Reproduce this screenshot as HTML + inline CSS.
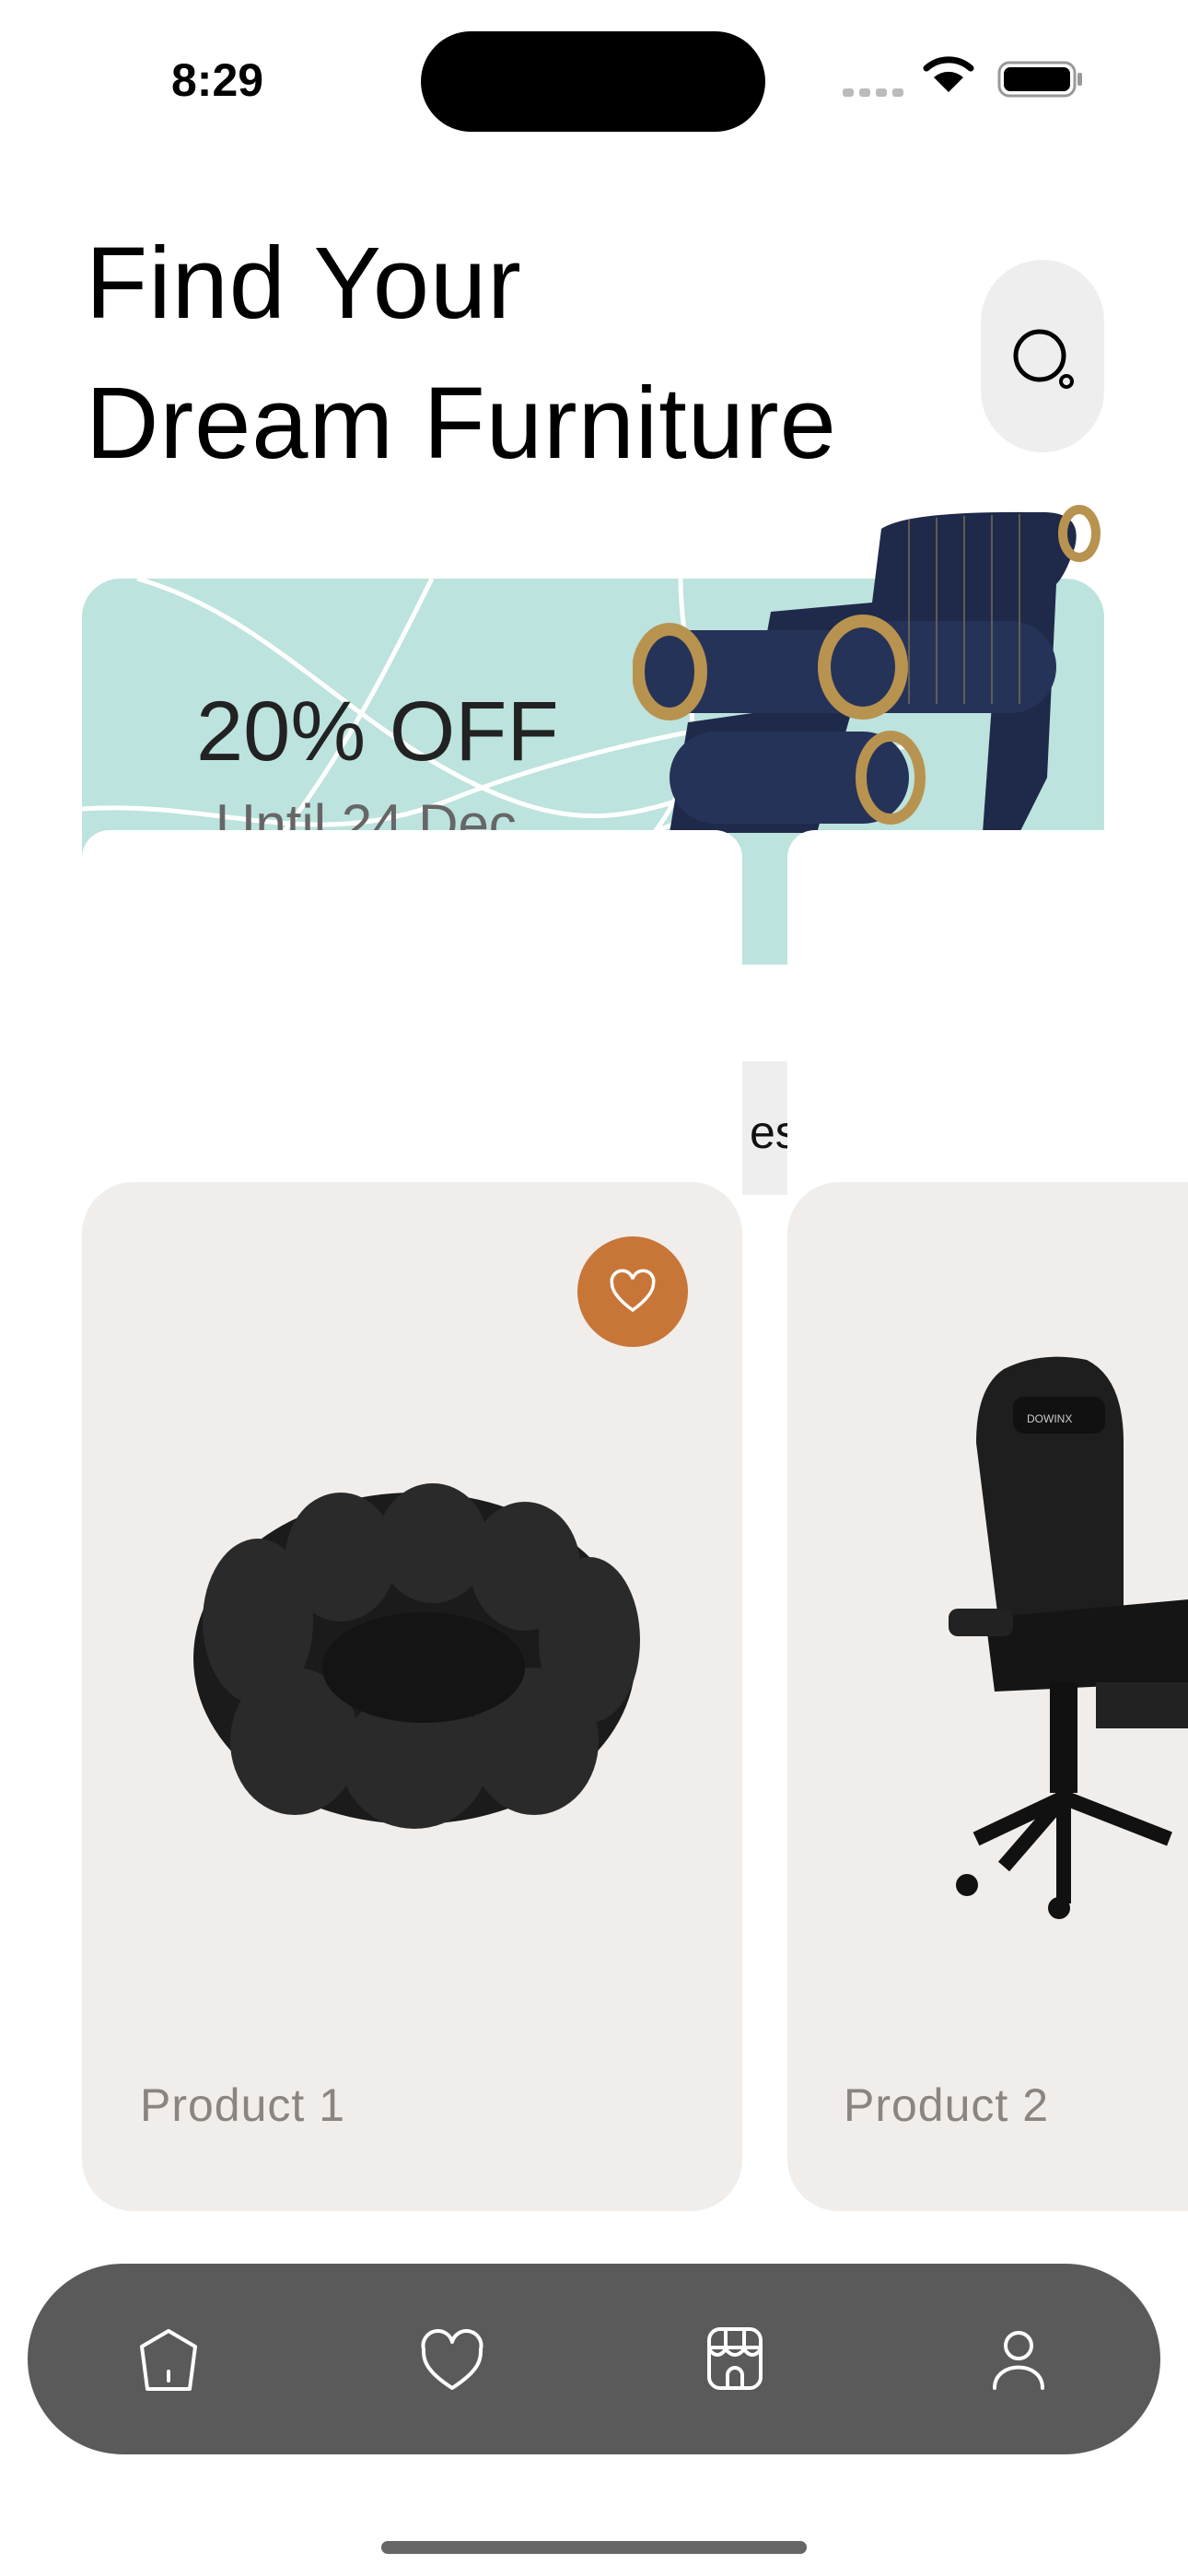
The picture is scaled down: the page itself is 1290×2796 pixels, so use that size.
<!DOCTYPE html>
<html><head><meta charset="utf-8"><style>
*{margin:0;padding:0;box-sizing:border-box}
body{width:1290px;height:2796px;background:#fff;position:relative;overflow:hidden;font-family:"Liberation Sans",sans-serif}
.a{position:absolute}
</style></head><body>
<!-- status bar -->
<div class="a" style="left:186px;top:58px;font-size:50px;font-weight:bold;color:#000">8:29</div>
<div class="a" style="left:457px;top:34px;width:374px;height:109px;border-radius:55px;background:#000"></div>
<svg class="a" style="left:910px;top:60px" width="270" height="50" viewBox="0 0 270 50">
<g fill="#bbb"><rect x="5" y="36" width="12" height="9" rx="3"/><rect x="23" y="36" width="12" height="9" rx="3"/><rect x="41" y="36" width="12" height="9" rx="3"/><rect x="59" y="36" width="12" height="9" rx="3"/></g>
<path d="M120 40 L104 24 A24 24 0 0 1 136 24 Z" fill="#000"/>
<path d="M96 14 A36 36 0 0 1 144 14" stroke="#000" stroke-width="7" fill="none" stroke-linecap="round"/>
<rect x="175" y="8" width="82" height="36" rx="11" fill="none" stroke="#999" stroke-width="3"/>
<rect x="180" y="13" width="72" height="26" rx="7" fill="#000"/>
<rect x="260" y="19" width="5" height="14" rx="2" fill="#999"/>
</svg>
<!-- title -->
<div class="a" style="left:93px;top:232px;font-size:110px;line-height:152px;color:#000;letter-spacing:1px">Find Your<br>Dream Furniture</div>
<div class="a" style="left:1065px;top:282px;width:134px;height:209px;border-radius:67px;background:#eeeeee"></div>
<svg class="a" style="left:1090px;top:350px" width="80" height="80"><circle cx="39" cy="36" r="26" fill="none" stroke="#000" stroke-width="5"/><circle cx="68" cy="64" r="6" fill="none" stroke="#000" stroke-width="4"/></svg>
<!-- banner -->
<div class="a" style="left:89px;top:628px;width:1110px;height:419px;border-radius:42px 42px 0 0;background:#bce3dd;overflow:hidden">
<svg width="1110" height="419" style="position:absolute;left:0;top:0"><g stroke="#fff" stroke-width="5" fill="none">
<path d="M0 250 C150 240 250 300 400 240 S700 160 800 140"/>
<path d="M60 0 C200 40 280 150 420 220 S620 250 760 200"/>
<path d="M380 0 C330 100 280 200 200 300"/>
<path d="M500 330 C600 280 750 220 900 180"/>
<path d="M650 0 C650 100 700 200 600 300"/>
</g></svg>
</div>
<div class="a" style="left:213px;top:742px;font-size:92px;color:#222">20% OFF</div>
<div class="a" style="left:234px;top:860px;font-size:60px;color:#666">Until 24 Dec</div>
<!-- chair -->
<svg class="a" style="left:687px;top:544px" width="510" height="360" viewBox="0 0 510 360">
<path d="M270 30 Q300 10 440 12 Q490 10 480 50 Q470 80 460 90 L450 300 L420 360 L380 360 L390 220 L240 220 L200 360 L40 360 L60 240 L130 230 L150 120 L260 110 Z" fill="#1f2a4a"/>
<rect x="10" y="140" width="280" height="90" rx="45" fill="#263358"/>
<rect x="220" y="130" width="240" height="100" rx="50" fill="#263358"/>
<ellipse cx="40" cy="185" rx="34" ry="46" fill="none" stroke="#b89350" stroke-width="14"/>
<ellipse cx="250" cy="180" rx="42" ry="50" fill="none" stroke="#b89350" stroke-width="14"/>
<rect x="40" y="250" width="260" height="100" rx="50" fill="#263358"/>
<ellipse cx="280" cy="300" rx="32" ry="45" fill="none" stroke="#b89350" stroke-width="12"/>
<ellipse cx="485" cy="35" rx="18" ry="26" fill="none" stroke="#b89350" stroke-width="10"/>
<g stroke="#8a7a5a" stroke-width="2" opacity=".6"><path d="M300 20 V220 M330 18 V220 M360 16 V220 M390 15 V220 M420 14 V220"/></g>
</svg>
<!-- white cards over banner -->
<div class="a" style="left:89px;top:901px;width:717px;height:380px;border-radius:30px 30px 0 0;background:#fff"></div>
<div class="a" style="left:855px;top:901px;width:500px;height:380px;border-radius:30px 0 0 0;background:#fff"></div>
<div class="a" style="left:806px;top:1152px;width:49px;height:145px;background:#eeeeee;overflow:hidden"><div style="position:absolute;left:8px;top:48px;font-size:50px;color:#111">es</div></div>
<!-- product cards -->
<div class="a" style="left:89px;top:1283px;width:717px;height:1117px;border-radius:56px;background:#f0edeb"></div>
<div class="a" style="left:855px;top:1283px;width:500px;height:1117px;border-radius:56px;background:#f0edeb"></div>
<div class="a" style="left:627px;top:1342px;width:120px;height:120px;border-radius:60px;background:#c87638"></div>
<svg class="a" style="left:657px;top:1372px" width="60" height="60" viewBox="0 0 24 24"><path d="M12 20 C5 15 3 11 3 8.5 A4.5 4.5 0 0 1 12 6.5 A4.5 4.5 0 0 1 21 8.5 C21 11 19 15 12 20Z" fill="none" stroke="#fff" stroke-width="1.4"/></svg>
<!-- pouf -->
<svg class="a" style="left:200px;top:1600px" width="500" height="390" viewBox="0 0 500 390">
<ellipse cx="250" cy="200" rx="240" ry="180" fill="#1b1b1b"/>
<g fill="#2a2a2a"><ellipse cx="80" cy="160" rx="60" ry="90"/><ellipse cx="170" cy="90" rx="60" ry="70"/><ellipse cx="270" cy="75" rx="60" ry="65"/><ellipse cx="370" cy="100" rx="60" ry="70"/><ellipse cx="440" cy="180" rx="55" ry="90"/><ellipse cx="120" cy="290" rx="70" ry="80"/><ellipse cx="250" cy="310" rx="80" ry="75"/><ellipse cx="380" cy="290" rx="70" ry="80"/></g>
<ellipse cx="260" cy="210" rx="110" ry="60" fill="#141414"/>
</svg>
<!-- gaming chair -->
<svg class="a" style="left:1030px;top:1466px" width="260" height="630" viewBox="0 0 260 630">
<path d="M60 20 Q100 0 150 10 Q190 30 190 100 L190 340 L60 340 L30 100 Q30 40 60 20Z" fill="#1e1e1e"/>
<rect x="70" y="50" width="100" height="40" rx="12" fill="#111"/>
<text x="85" y="78" font-size="12" fill="#ccc" font-family="Liberation Sans">DOWINX</text>
<path d="M40 290 L260 270 L260 360 L50 370Z" fill="#151515"/>
<rect x="0" y="280" width="70" height="30" rx="10" fill="#222"/>
<rect x="110" y="360" width="30" height="120" fill="#111"/>
<rect x="160" y="360" width="100" height="50" fill="#222"/>
<path d="M30 530 L125 485 L240 530 M125 485 L125 600 M60 560 L125 485" stroke="#111" stroke-width="16" fill="none"/>
<circle cx="20" cy="580" r="12" fill="#111"/><circle cx="120" cy="605" r="12" fill="#111"/>
</svg>
<div class="a" style="left:152px;top:2256px;font-size:50px;color:#8a8580;letter-spacing:1px">Product 1</div>
<div class="a" style="left:916px;top:2256px;font-size:50px;color:#8a8580;letter-spacing:1px">Product 2</div>
<!-- nav -->
<div class="a" style="left:30px;top:2457px;width:1230px;height:207px;border-radius:104px;background:#5a5a5a"></div>
<svg class="a" style="left:0;top:2520px" width="1290" height="90">
<g fill="none" stroke="#fff" stroke-width="4" stroke-linejoin="round" stroke-linecap="round">
<path d="M183 10 L212 27 L206 73 L160 73 L154 27 Z"/><path d="M183 54 V64"/>
<path d="M491 72 C460 52 460 40 460 30 A15 15 0 0 1 491 22 A15 15 0 0 1 522 30 C522 40 522 52 491 72Z"/>
<rect x="770" y="8" width="56" height="64" rx="12"/><path d="M770 28 H826 M788 8 V30 M808 8 V30 M770 30 Q779 42 788 30 Q798 42 808 30 Q817 42 826 30"/><path d="M790 72 V58 A8 8 0 0 1 806 58 V72"/>
<circle cx="1106" cy="26" r="14"/><path d="M1080 72 C1080 42 1132 42 1132 72"/>
</g></svg>
<div class="a" style="left:414px;top:2758px;width:462px;height:14px;border-radius:7px;background:#666"></div>
</body></html>
